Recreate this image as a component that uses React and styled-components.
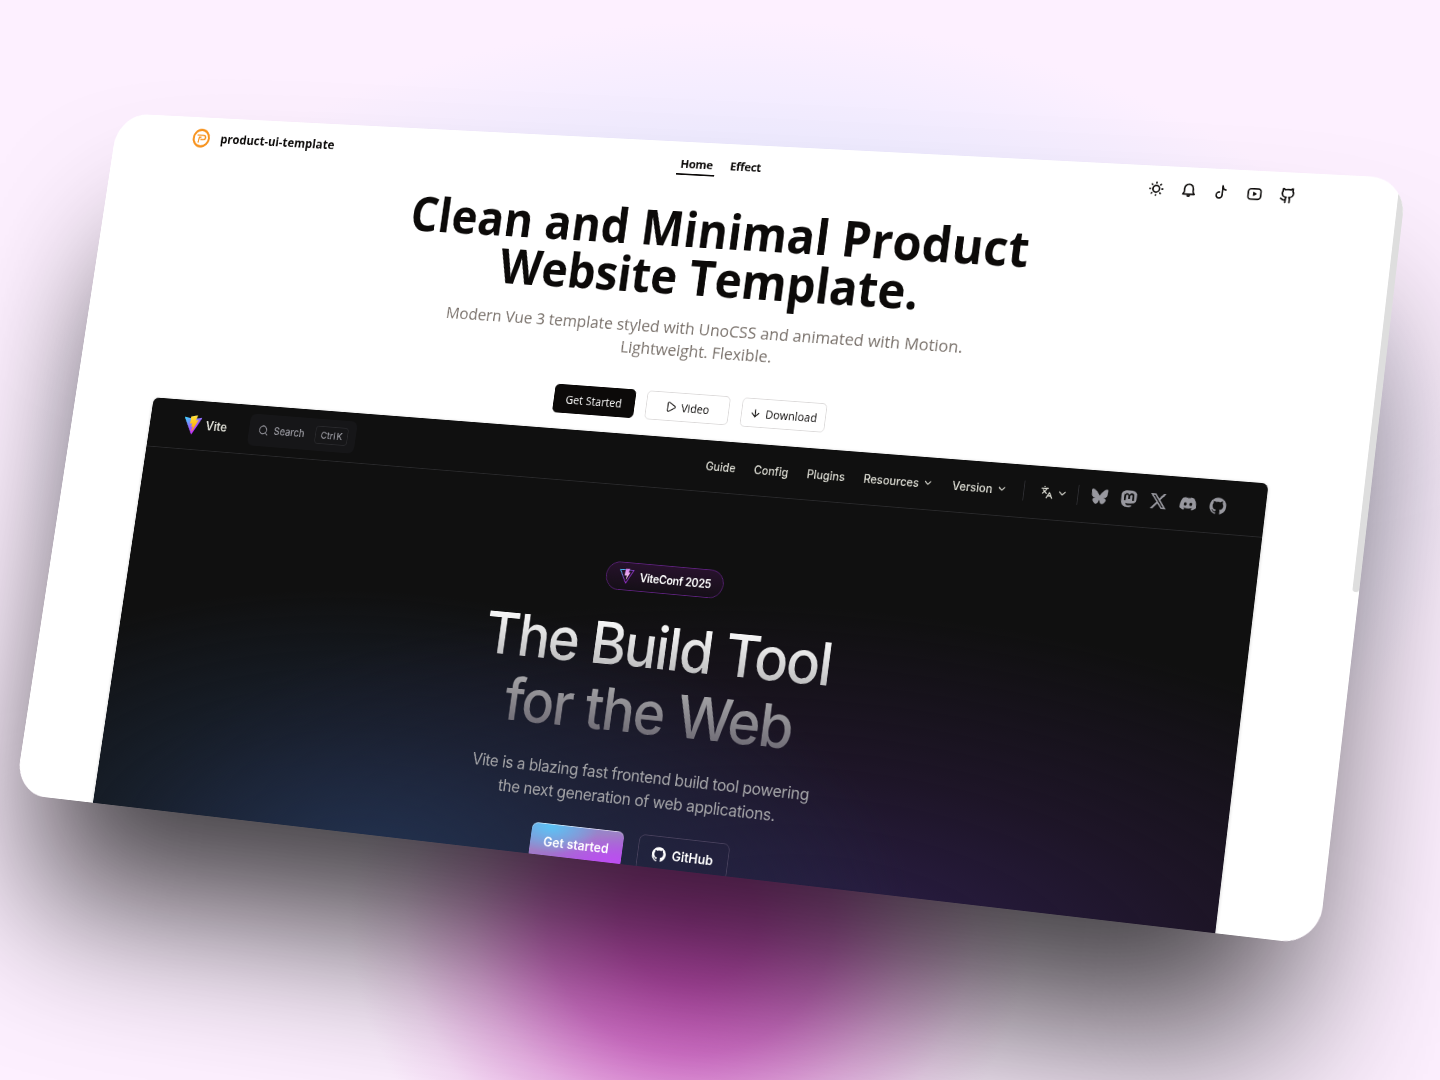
import React from 'react';
import styled, { createGlobalStyle } from 'styled-components';
import { Search, ChevronDown, Languages, ArrowDown, Play, Github } from 'lucide-react';
import { SiBluesky, SiMastodon, SiX, SiDiscord, SiGithub } from 'react-icons/si';

const PAGE_W = 1707;
const PAGE_H = 895;

// Projects a flat w x h page onto four screen corners (clockwise from top left).
function projectTo(w, h, [[x0, y0], [x1, y1], [x2, y2], [x3, y3]]) {
  const dx1 = x1 - x2, dx2 = x3 - x2, dx3 = x0 - x1 + x2 - x3;
  const dy1 = y1 - y2, dy2 = y3 - y2, dy3 = y0 - y1 + y2 - y3;
  const den = dx1 * dy2 - dx2 * dy1;
  const g = (dx3 * dy2 - dx2 * dy3) / den;
  const k = (dx1 * dy3 - dx3 * dy1) / den;
  const m = [
    (x1 - x0 + g * x1) / w, (y1 - y0 + g * y1) / w, 0, g / w,
    (x3 - x0 + k * x3) / h, (y3 - y0 + k * y3) / h, 0, k / h,
    0, 0, 1, 0,
    x0, y0, 0, 1,
  ];
  return `matrix3d(${m.map((n) => n.toFixed(10)).join(',')})`;
}

const tilt = projectTo(PAGE_W, PAGE_H, [
  [118.6, 113.1],
  [1407, 178.3],
  [1318.2, 945.2],
  [15, 793.7],
]);

const GlobalStyle = createGlobalStyle`
  *, *::before, *::after { box-sizing: border-box; }
  body { margin: 0; background: #fdf0ff; }
  h1, h2, p { margin: 0; }
`;

const Stage = styled.main`
  width: 1440px;
  height: 1080px;
  overflow: hidden;
  background:
    radial-gradient(ellipse 340px 320px at 690px 920px, rgba(212, 78, 196, 1) 0%, rgba(212, 78, 196, 0.95) 20%, rgba(212, 80, 198, 0.76) 42%, rgba(214, 90, 200, 0.4) 64%, rgba(216, 100, 205, 0.12) 84%, rgba(216, 100, 205, 0) 100%),
    radial-gradient(ellipse 720px 460px at 740px 480px, #e4e6ff 0%, #e7e8ff 60%, rgba(253, 240, 255, 0) 100%),
    #fdf0ff;
`;

const Card = styled.article`
  width: ${PAGE_W}px;
  height: ${PAGE_H}px;
  border-radius: 44px;
  transform-origin: 0 0;
  transform: ${tilt};
  box-shadow: 0 150px 200px -36px rgba(0, 0, 0, 0.75);
`;

const Viewport = styled.div`
  width: 100%;
  height: 100%;
  display: flex;
  overflow: hidden;
  border-radius: inherit;
  background: #fff;
  color: #0c0a09;
  font-family: "Open Sans", "Noto Sans", sans-serif;
`;

const Page = styled.div`
  flex: 1;
  min-width: 0;
  display: flex;
  flex-direction: column;
  padding: 0 113px 0 113.5px;
`;

const ScrollTrack = styled.div`
  width: 8px;
`;

const ScrollThumb = styled.div`
  height: 488px;
  border-radius: 4px;
  background: #dedede;
`;

const TopBar = styled.header`
  flex: none;
  height: 56px;
  display: grid;
  grid-template-columns: 1fr auto 1fr;
  align-items: center;
`;

const Brand = styled.div`
  display: flex;
  align-items: center;
  gap: 16px;
  padding-bottom: 2px;
  font-size: 16px;
  font-weight: 700;
  letter-spacing: 0.12px;
`;

const Menu = styled.nav`
  display: flex;
  gap: 15px;
  margin-left: 2px;
`;

const MenuItem = styled.span`
  padding: 2px 4px;
  border-bottom: 2px solid ${(p) => (p.$active ? '#0c0a09' : 'transparent')};
  font-size: 15px;
  line-height: 22px;
  font-weight: 700;
  letter-spacing: -0.35px;
`;

const Tools = styled.div`
  display: flex;
  justify-content: flex-end;
  gap: 4px;
`;

const Tool = styled.span`
  width: 36px;
  height: 36px;
  display: grid;
  place-items: center;
  svg { width: 20px; height: 20px; }
`;

const Hero = styled.section`
  flex: none;
  display: flex;
  flex-direction: column;
  align-items: center;
  padding: 22.5px 0 0 2px;
  text-align: center;
`;

const Title = styled.h1`
  font-size: 60px;
  line-height: 60px;
  font-weight: 700;
`;

const Line = styled.span`
  display: block;
  width: max-content;
  margin: 0 auto;
  letter-spacing: ${(p) => p.$track || 0}px;
  white-space: nowrap;
`;

const Subtitle = styled.p`
  margin-top: 20.5px;
  font-size: 20.6px;
  line-height: 28px;
  color: #79716b;
`;

const Actions = styled.div`
  display: flex;
  gap: 15.5px;
  margin-top: 39px;
`;

const Button = styled.button`
  width: ${(p) => p.$w}px;
  height: 36px;
  display: flex;
  align-items: center;
  justify-content: center;
  gap: 6px;
  padding: 0;
  border: 1px solid ${(p) => (p.$solid ? '#0c0a09' : '#dcdada')};
  border-radius: 6px;
  background: ${(p) => (p.$solid ? '#0c0a09' : '#fff')};
  color: ${(p) => (p.$solid ? '#fafaf9' : '#0c0a09')};
  font: 500 14px "Open Sans", sans-serif;
  letter-spacing: 0.1px;
  svg { width: 15px; height: 15px; }
`;

const Preview = styled.section`
  flex: none;
  height: 830px;
  margin-top: 20px;
  border-radius: 8px;
  background:
    radial-gradient(ellipse 700px 350px at 28% 570px, rgba(35, 53, 84, 0.95), rgba(31, 47, 72, 0.5) 50%, rgba(16, 16, 16, 0) 100%),
    radial-gradient(ellipse 980px 390px at 68% 580px, rgba(44, 30, 74, 0.95), rgba(38, 24, 54, 0.6) 50%, rgba(16, 16, 16, 0) 100%),
    #101010;
  box-shadow: 0 1px 4px rgba(0, 0, 0, 0.2);
  color: #dfdfd6;
  font-family: Inter, sans-serif;
`;

const SiteBar = styled.header`
  height: 64px;
  display: flex;
  align-items: center;
  padding: 0 39.5px 1px 49px;
  border-bottom: 1px solid #29292b;
  font-size: 14px;
  font-weight: 500;
`;

const SiteBrand = styled.div`
  display: flex;
  align-items: center;
  gap: 7px;
  font-size: 16px;
  font-weight: 600;
`;

const SearchBox = styled.div`
  width: 151px;
  height: 41px;
  display: flex;
  align-items: center;
  margin-left: 32px;
  padding: 0 11px 0 12.5px;
  border-radius: 8px;
  background: #161618;
  color: #98989f;
  font-size: 13px;
`;

const SearchLabel = styled.span`
  margin-left: 7.5px;
`;

const Keys = styled.kbd`
  width: 46px;
  height: 23px;
  display: grid;
  place-items: center;
  margin-left: auto;
  border: 1px solid #29292c;
  border-radius: 4px;
  font: 500 12px Inter, sans-serif;
  word-spacing: -1.5px;
`;

const SiteNav = styled.nav`
  display: flex;
  align-items: center;
  margin-left: auto;
`;

const SiteLink = styled.span`
  display: flex;
  align-items: center;
  gap: 4px;
  padding: 0 12px;
`;

const Rule = styled.span`
  width: 1px;
  height: 24px;
  margin: 0 8px 0 ${(p) => p.$left}px;
  background: #2e2e32;
`;

const Socials = styled.div`
  display: flex;
  color: #98989f;
`;

const Social = styled.span`
  width: 36px;
  height: 36px;
  display: grid;
  place-items: center;
  svg { width: 20px; height: 20px; }
`;

const Intro = styled.div`
  display: flex;
  flex-direction: column;
  align-items: center;
  padding: 94px 0 0 2px;
  text-align: center;
`;

const Badge = styled.div`
  width: 155px;
  height: 34.5px;
  display: flex;
  align-items: center;
  justify-content: center;
  gap: 8px;
  border: 1px solid #5c217c;
  border-radius: 18px;
  background: linear-gradient(#27122c, #150f17);
  color: #fff;
  font-size: 14px;
  font-weight: 600;
  letter-spacing: -0.36px;
`;

const Headline = styled.h2`
  margin-top: 26px;
  background: linear-gradient(180deg, #ffffff 0%, #f2f2f2 12%, #bfbfc0 42%, #98979b 65%, #716e77 92%);
  -webkit-background-clip: text;
  background-clip: text;
  color: transparent;
  font-size: 72px;
  line-height: 80px;
  font-weight: 500;
`;

const Tagline = styled.p`
  margin-top: 24px;
  color: #a5a5a8;
  font-size: 20px;
  line-height: 29.5px;
`;

const SiteActions = styled.div`
  display: flex;
  gap: 20px;
  margin-top: 24px;
`;

const SiteButton = styled.span`
  width: ${(p) => p.$w}px;
  height: 44px;
  display: flex;
  align-items: center;
  justify-content: center;
  gap: 8px;
  border-radius: 8px;
  border: ${(p) => (p.$brand ? 'none' : '1px solid #47405c')};
  background: ${(p) =>
    p.$brand
      ? 'radial-gradient(ellipse 62px 32px at 20% 8%, #5cc2f5, rgba(92,194,245,0)), radial-gradient(ellipse 80px 40px at 90% 100%, #c04df5, rgba(192,77,245,0)), linear-gradient(165deg, #7f9ad6 0%, #9f7fc6 45%, #a755dc 90%)'
      : 'transparent'};
  box-shadow: ${(p) => (p.$brand ? 'inset 0 1px 0 rgba(255,255,255,.6)' : 'none')};
  color: #fff;
  font-size: 16px;
  font-weight: 600;
`;

const Stroke = (props) => (
  <svg viewBox="0 0 24 24" fill="none" stroke="currentColor" strokeWidth="2" strokeLinecap="round" strokeLinejoin="round" {...props} />
);

const SunIcon = () => (
  <Stroke>
    <circle cx="12" cy="12" r="4.9" strokeWidth="2.3" />
    <path d="M12 2.500v1M12 20.500v1M2.500 12h1M20.500 12h1M5.300 5.300l.7.7M18 18l.7.7M5.300 18.700l.7-.7M18 6l.7-.7" strokeWidth="2.200" />
  </Stroke>
);

const BellIcon = () => (
  <Stroke>
    <path d="M3.600 17.400h16.800l-2-3.300V9.300a6.400 6.400 0 0 0-12.800 0v4.800z" strokeWidth="2.200" />
    <path d="M9.600 19.200h4.800c-.4 1.300-1.300 1.900-2.400 1.900s-2-.6-2.400-1.900z" fill="currentColor" strokeWidth="1" />
  </Stroke>
);

const TikTokIcon = () => (
  <Stroke>
    <path d="M13.200 3v13.200a4.300 4.300 0 1 1-4.300-4.300" strokeWidth="2.200" />
    <path d="M13.200 3c.3 3 2 5.200 4.800 5.600" strokeWidth="2.200" />
  </Stroke>
);

const YouTubeIcon = () => (
  <Stroke>
    <rect x="2.800" y="4.600" width="18.400" height="15" rx="4.200" strokeWidth="2.200" />
    <path d="M10.500 9.800v4.600l4-2.300z" fill="currentColor" strokeWidth="1.400" />
  </Stroke>
);

const CatIcon = () => <Github strokeWidth={2.3} />;

const ProductLogo = () => (
  <svg width="25" height="25" viewBox="0 0 25 25" fill="none" stroke="#f7931e">
    <circle cx="12.500" cy="12.500" r="11" strokeWidth="2.800" />
    <path d="M6.500 8.600h9.200a2.900 2.900 0 0 1 0 5.800h-4.200M12.500 11.400H9.700L8.600 18.500" strokeWidth="1.900" />
  </svg>
);

const ViteLogo = () => (
  <svg width="25" height="25" viewBox="0 0 256 257">
    <defs>
      <linearGradient id="vBody" x1="-.8%" x2="57.600%" y1="7.700%" y2="78.400%">
        <stop offset="0%" stopColor="#41D1FF" />
        <stop offset="100%" stopColor="#BD34FE" />
      </linearGradient>
      <linearGradient id="vBolt" x1="43.400%" x2="50.300%" y1="2.200%" y2="89%">
        <stop offset="0%" stopColor="#FFEA83" />
        <stop offset="8.300%" stopColor="#FFDD35" />
        <stop offset="100%" stopColor="#FFA800" />
      </linearGradient>
    </defs>
    <path fill="url(#vBody)" d="M255.153 37.938L134.897 252.976c-2.483 4.440-8.862 4.466-11.382.048L.875 37.958c-2.746-4.814 1.371-10.646 6.827-9.670l120.385 21.517a6.537 6.537 0 0 0 2.322-.004l117.867-21.483c5.438-.991 9.574 4.796 6.877 9.620Z" />
    <path fill="url(#vBolt)" d="M185.432.063L96.440 17.501a3.268 3.268 0 0 0-2.634 3.014l-5.474 92.456a3.268 3.268 0 0 0 3.997 3.378l24.777-5.718c2.318-.535 4.413 1.507 3.936 3.838l-7.361 36.047c-.495 2.426 1.782 4.500 4.151 3.780l15.304-4.649c2.372-.720 4.652 1.360 4.150 3.788l-11.698 56.621c-.732 3.542 3.979 5.473 5.943 2.437l1.313-2.028l72.516-144.720c1.215-2.423-.880-5.186-3.540-4.672l-25.505 4.922c-2.396.462-4.435-1.770-3.759-4.114l16.646-57.705c.677-2.350-1.370-4.583-3.769-4.113Z" />
  </svg>
);

const ConfLogo = () => (
  <svg width="20" height="20" viewBox="0 0 20 20" fill="none">
    <defs>
      <linearGradient id="cEdge" x1="0" x2="1" y1="0" y2="1">
        <stop offset="0" stopColor="#41D1FF" />
        <stop offset="0.500" stopColor="#8a35c4" />
        <stop offset="1" stopColor="#BD34FE" />
      </linearGradient>
      <linearGradient id="cBolt" x1="0" x2="0" y1="0" y2="1">
        <stop offset="0" stopColor="#d77cf5" />
        <stop offset="1" stopColor="#ffd9e8" />
      </linearGradient>
    </defs>
    <path d="M1 2.500h18L10 19z" stroke="url(#cEdge)" strokeWidth="1.100" strokeLinejoin="round" />
    <path d="M8 1.500l5.500-.8-1 4.800h2L9.800 15l.7-5.500H7.500z" fill="url(#cBolt)" />
  </svg>
);

const links = [
  { label: 'Guide' },
  { label: 'Config' },
  { label: 'Plugins' },
  { label: 'Resources', more: true },
  { label: 'Version', more: true },
];

const socials = [SiBluesky, SiMastodon, SiX, SiDiscord, SiGithub];
const tools = [SunIcon, BellIcon, TikTokIcon, YouTubeIcon, CatIcon];

export default function App() {
  return (
    <>
      <GlobalStyle />
      <Stage>
        <Card>
          <Viewport>
            <Page>
              <TopBar>
                <Brand>
                  <ProductLogo />
                  <span>product-ui-template</span>
                </Brand>
                <Menu>
                  <MenuItem $active>Home</MenuItem>
                  <MenuItem>Effect</MenuItem>
                </Menu>
                <Tools>
                  {tools.map((Icon, i) => (
                    <Tool key={i}><Icon /></Tool>
                  ))}
                </Tools>
              </TopBar>
              <Hero>
                <Title>
                  <Line $track={0.4}>Clean and Minimal Product</Line>
                  <Line $track={-0.05}>Website Template.</Line>
                </Title>
                <Subtitle>
                  <Line $track={0.06}>Modern Vue 3 template styled with UnoCSS and animated with Motion.</Line>
                  <Line $track={0.02}>Lightweight. Flexible.</Line>
                </Subtitle>
                <Actions>
                  <Button $w={109} $solid>Get Started</Button>
                  <Button $w={110}><Play />Video</Button>
                  <Button $w={110.5}><ArrowDown />Download</Button>
                </Actions>
              </Hero>
              <Preview>
                <SiteBar>
                  <SiteBrand><ViteLogo />Vite</SiteBrand>
                  <SearchBox>
                    <Search size={15} />
                    <SearchLabel>Search</SearchLabel>
                    <Keys>Ctrl K</Keys>
                  </SearchBox>
                  <SiteNav>
                    {links.map((l) => (
                      <SiteLink key={l.label}>
                        {l.label}
                        {l.more && <ChevronDown size={14} />}
                      </SiteLink>
                    ))}
                    <Rule $left={8} />
                    <SiteLink><Languages size={16} /><ChevronDown size={14} /></SiteLink>
                    <Rule $left={0} />
                    <Socials>
                      {socials.map((Icon, i) => (
                        <Social key={i}><Icon /></Social>
                      ))}
                    </Socials>
                  </SiteNav>
                </SiteBar>
                <Intro>
                  <Badge><ConfLogo />ViteConf 2025</Badge>
                  <Headline>
                    <Line $track={-2.35}>The Build Tool</Line>
                    <Line $track={-2}>for the Web</Line>
                  </Headline>
                  <Tagline>
                    <Line $track={-0.37}>Vite is a blazing fast frontend build tool powering</Line>
                    <Line $track={-0.38}>the next generation of web applications.</Line>
                  </Tagline>
                  <SiteActions>
                    <SiteButton $w={122} $brand>Get started</SiteButton>
                    <SiteButton $w={118}><SiGithub size={18} />GitHub</SiteButton>
                  </SiteActions>
                </Intro>
              </Preview>
            </Page>
            <ScrollTrack><ScrollThumb /></ScrollTrack>
          </Viewport>
        </Card>
      </Stage>
    </>
  );
}
